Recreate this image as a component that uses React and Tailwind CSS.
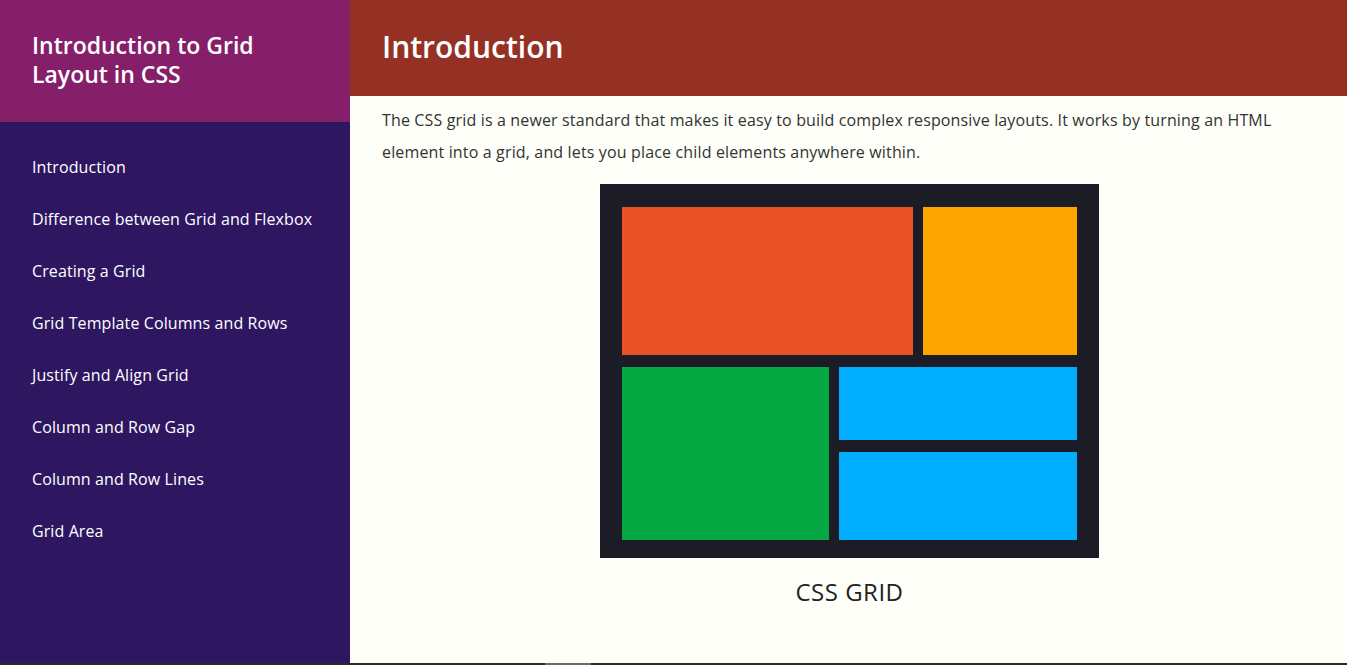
import React from "react";

const nav = [
  "Introduction",
  "Difference between Grid and Flexbox",
  "Creating a Grid",
  "Grid Template Columns and Rows",
  "Justify and Align Grid",
  "Column and Row Gap",
  "Column and Row Lines",
  "Grid Area",
];

function GridPicture() {
  return (
    <svg width="499" height="374" viewBox="0 0 499 374" className="block">
      <rect x="0" y="0" width="499" height="374" fill="#1b1c25" />
      <rect x="22" y="23" width="291" height="148" fill="#e85224" />
      <rect x="323" y="23" width="154" height="148" fill="#ffa500" />
      <rect x="22" y="183" width="207" height="173" fill="#05a843" />
      <rect x="239" y="183" width="238" height="73" fill="#00adff" />
      <rect x="239" y="268" width="238" height="88" fill="#00adff" />
    </svg>
  );
}

export default function App() {
  const font = { fontFamily: "'Open Sans', 'Noto Sans', sans-serif" };
  return (
    <div className="w-[1347px] h-[665px] overflow-hidden flex flex-col" style={font}>
      <div className="flex h-[663px]">
        <aside className="w-[350px] flex flex-col bg-[#2e1760]">
          <div className="h-[122px] bg-[#861f6a] px-8 pt-[31px]">
            <h1 className="text-white text-[23px] font-semibold leading-[29px]">
              Introduction to Grid
              <br />
              Layout in CSS
            </h1>
          </div>
          <nav className="flex flex-col pt-[34px] px-8 gap-[30px]">
            {nav.map((n) => (
              <div key={n} className="text-white text-[16px] leading-[22px] tracking-[0.1px]">
                {n}
              </div>
            ))}
          </nav>
        </aside>
        <main className="flex-1 bg-[#fdfff8] flex flex-col">
          <header className="h-[96px] bg-[#943124] px-8 flex items-center">
            <h2 className="text-white text-[30px] font-semibold leading-none pb-[2px]">Introduction</h2>
          </header>
          <div className="px-8 pt-[8px]">
            <p className="text-[#333333] text-[16px] leading-[32px] tracking-[0.15px]">
              The CSS grid is a newer standard that makes it easy to build complex responsive layouts. It works by
              turning an HTML element into a grid, and lets you place child elements anywhere within.
            </p>
            <div className="flex flex-col items-center mt-[16px] pl-[2px]">
              <GridPicture />
              <div className="mt-[20px] text-[24px] text-[#222222] leading-[28px] tracking-[0.5px]">CSS GRID</div>
            </div>
          </div>
        </main>
      </div>
      <div className="h-[2px] bg-[#2a2a2a] flex">
        <div className="w-[545px]" />
        <div className="w-[46px] bg-[#6a6a6a]" />
      </div>
    </div>
  );
}
